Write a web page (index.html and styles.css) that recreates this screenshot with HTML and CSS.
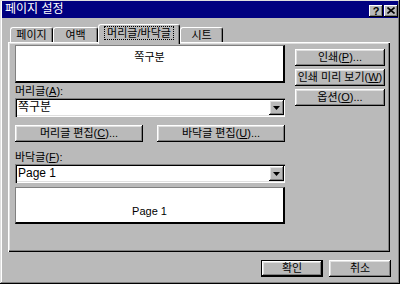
FILE: index.html
```html
<!DOCTYPE html>
<html lang="ko">
<head>
<meta charset="utf-8">
<link rel="stylesheet" href="styles.css">
</head>
<body>
<div class="window">
  <div class="titlebar">
    <span class="title">페이지 설정</span>
    <div class="caps">
      <span class="cap">?</span>
      <span class="cap"><svg width="8" height="7" viewBox="0 0 8 7"><path d="M0.5 0.5 L7.5 6.5 M7.5 0.5 L0.5 6.5" stroke="#000" stroke-width="1.6"/></svg></span>
    </div>
  </div>
  <div class="tabs">
    <div class="tab t1">페이지</div>
    <div class="tab t2">여백</div>
    <div class="tab active"><span class="focus">머리글/바닥글</span></div>
    <div class="tab t4">시트</div>
  </div>
  <div class="panel">
    <div class="leftcol">
      <div class="preview head-prev">쪽구분</div>
      <div class="label">머리글(<u>A</u>):</div>
      <div class="combo"><span class="ctext">쪽구분</span><span class="drop"><svg width="7" height="4" viewBox="0 0 7 4"><path d="M0 0 H7 L3.5 4 Z" fill="#000"/></svg></span></div>
      <div class="btnrow">
        <div class="btn wide">머리글 편집(<u>C</u>)...</div>
        <div class="btn wide">바닥글 편집(<u>U</u>)...</div>
      </div>
      <div class="label l2">바닥글(<u>F</u>):</div>
      <div class="combo"><span class="ctext">Page 1</span><span class="drop"><svg width="7" height="4" viewBox="0 0 7 4"><path d="M0 0 H7 L3.5 4 Z" fill="#000"/></svg></span></div>
      <div class="preview foot-prev">Page 1</div>
    </div>
    <div class="rightcol">
      <div class="btn side">인쇄(<u>P</u>)...</div>
      <div class="btn side">인쇄 미리 보기(<u>W</u>)</div>
      <div class="btn side">옵션(<u>O</u>)...</div>
    </div>
  </div>
  <div class="actions">
    <div class="btn act default">확인</div>
    <div class="btn act">취소</div>
  </div>
</div>
</body>
</html>
```

FILE: styles.css
```css
html, body {
  margin: 0;
  padding: 0;
  background: #bababa;
}
body {
  font-family: "Liberation Sans", "Noto Sans CJK KR", sans-serif;
  font-size: 11px;
  color: #000;
}
.window {
  width: 400px;
  height: 284px;
  box-sizing: border-box;
  padding: 1px 2px 0 2px;
  background: #bababa;
  box-shadow: inset -1px -1px #000, inset 1px 1px #dfdfdf, inset -2px -2px #808080, inset 2px 2px #fff;
  overflow: hidden;
}
.titlebar {
  height: 17px;
  background: #000080;
  color: #fff;
  display: flex;
  align-items: center;
  justify-content: space-between;
  padding: 0 0 0 3px;
}
.title {
  font-size: 12px;
  line-height: 17px;
}
.caps {
  display: flex;
  gap: 1px;
  margin-top: 2px;
}
.cap {
  width: 14px;
  height: 12px;
  box-sizing: border-box;
  background: #bababa;
  color: #000;
  font-weight: bold;
  font-size: 11px;
  line-height: 12px;
  text-align: center;
  display: flex;
  align-items: center;
  justify-content: center;
  box-shadow: inset -1px -1px #000, inset 1px 1px #fff, inset -2px -2px #808080;
}
.tabs {
  display: flex;
  align-items: flex-end;
  height: 18px;
  margin: 6px 0 0 8px;
}
.tab {
  height: 15px;
  box-sizing: border-box;
  border-top: 1px solid #fff;
  border-left: 1px solid #fff;
  border-right: 1px solid #000;
  border-radius: 3px 3px 0 0;
  box-shadow: inset -1px 0 #808080;
  text-align: center;
  line-height: 14px;
  background: #bababa;
}
.t1 { width: 43px; }
.t2 { width: 45px; }
.t4 { width: 43px; }
.tab.active {
  width: 82px;
  height: 20px;
  margin-bottom: -2px;
  position: relative;
  z-index: 1;
  padding-top: 2px;
  line-height: 13px;
}
.focus {
  outline: 1px dotted #000;
  padding: 0 2px;
}
.panel {
  margin-left: 6px;
  width: 382px;
  height: 210px;
  box-sizing: border-box;
  padding: 3px 0 0 7px;
  display: flex;
  box-shadow: inset 1px 1px #fff, inset -1px -1px #000, inset -2px -2px #808080, inset 2px 2px #dfdfdf;
}
.leftcol {
  width: 270px;
  display: flex;
  flex-direction: column;
}
.rightcol {
  width: 90px;
  margin-left: 10px;
  margin-top: 4px;
  display: flex;
  flex-direction: column;
  gap: 3px;
}
.preview {
  background: #fff;
  box-sizing: border-box;
  border-left: 1px solid #808080;
  border-top: 1px solid #808080;
  border-right: 2px solid #000;
  border-bottom: 2px solid #000;
  text-align: center;
}
.head-prev {
  height: 38px;
  padding-top: 5px;
  line-height: 13px;
}
.foot-prev {
  height: 37px;
  margin-top: 4px;
  display: flex;
  align-items: flex-end;
  justify-content: center;
  padding-bottom: 4px;
  line-height: 13px;
}
.label {
  height: 15px;
  box-sizing: border-box;
  padding-top: 2px;
  line-height: 13px;
}
.label.l2 {
  height: 22px;
  padding-top: 8px;
  line-height: 14px;
}
.combo {
  height: 19px;
  box-sizing: border-box;
  background: #fff;
  display: flex;
  align-items: center;
  justify-content: space-between;
  padding: 2px 1px 2px 3px;
  box-shadow: inset 1px 1px #808080, inset 2px 2px #000, inset -1px -1px #fff, inset -2px -2px #dfdfdf;
  font-size: 12px;
}
.ctext {
  line-height: 15px;
}
.drop {
  width: 15px;
  height: 15px;
  box-sizing: border-box;
  background: #bababa;
  display: flex;
  align-items: center;
  justify-content: center;
  box-shadow: inset -1px -1px #000, inset 1px 1px #fff, inset -2px -2px #808080, inset 2px 2px #dfdfdf;
}
.btnrow {
  margin-top: 8px;
  display: flex;
  justify-content: space-between;
}
.btn {
  height: 17px;
  box-sizing: border-box;
  background: #bababa;
  text-align: center;
  line-height: 16px;
  box-shadow: inset -1px -1px #000, inset 1px 1px #fff, inset -2px -2px #808080, inset 2px 2px #dfdfdf;
}
.btn.wide { width: 128px; }
.btn.side { width: 90px; }
.actions {
  margin-top: 8px;
  margin-right: 7px;
  display: flex;
  justify-content: flex-end;
  gap: 6px;
}
.btn.act { width: 62px; }
.btn.default {
  border: 1px solid #000;
  line-height: 14px;
}
u {
  text-decoration: underline;
  text-underline-offset: 1px;
}
```
